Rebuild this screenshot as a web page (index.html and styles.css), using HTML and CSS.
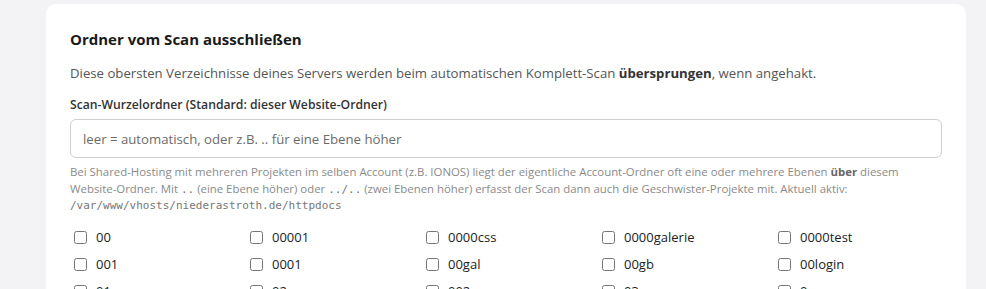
FILE: index.html
```html
<!DOCTYPE html>
<html lang="de">
<head>
<meta charset="utf-8">
<link rel="stylesheet" href="styles.css">
</head>
<body>
<section class="card">
  <h2 class="title">Ordner vom Scan ausschließen</h2>
  <p class="desc">Diese obersten Verzeichnisse deines Servers werden beim automatischen Komplett-Scan <strong>übersprungen</strong>, wenn angehakt.</p>
  <label class="field-label" for="root">Scan-Wurzelordner (Standard: dieser Website-Ordner)</label>
  <input class="field" id="root" type="text" placeholder="leer = automatisch, oder z.B. .. für eine Ebene höher">
  <p class="help">Bei Shared-Hosting mit mehreren Projekten im selben Account (z.B. IONOS) liegt der eigentliche Account-Ordner oft eine oder mehrere Ebenen <strong>über</strong> diesem Website-Ordner. Mit <code>..</code> (eine Ebene höher) oder <code>../..</code> (zwei Ebenen höher) erfasst der Scan dann auch die Geschwister-Projekte mit. Aktuell aktiv: <code>/var/www/vhosts/niederastroth.de/httpdocs</code></p>
  <div class="grid">
    <label class="opt"><input type="checkbox"><span>00</span></label>
    <label class="opt"><input type="checkbox"><span>00001</span></label>
    <label class="opt"><input type="checkbox"><span>0000css</span></label>
    <label class="opt"><input type="checkbox"><span>0000galerie</span></label>
    <label class="opt"><input type="checkbox"><span>0000test</span></label>
    <label class="opt"><input type="checkbox"><span>001</span></label>
    <label class="opt"><input type="checkbox"><span>0001</span></label>
    <label class="opt"><input type="checkbox"><span>00gal</span></label>
    <label class="opt"><input type="checkbox"><span>00gb</span></label>
    <label class="opt"><input type="checkbox"><span>00login</span></label>
    <label class="opt"><input type="checkbox"><span>01</span></label>
    <label class="opt"><input type="checkbox"><span>02</span></label>
    <label class="opt"><input type="checkbox"><span>002</span></label>
    <label class="opt"><input type="checkbox"><span>03</span></label>
    <label class="opt"><input type="checkbox"><span>0</span></label>
  </div>
</section>
</body>
</html>
```

FILE: styles.css
```css
html, body {
  margin: 0;
  background: #f3f3f5;
}
body {
  padding: 4px 20px 0 46px;
  font-family: "Open Sans", "Noto Sans", sans-serif;
  color: #1f1f1f;
  height: 289px;
  overflow: hidden;
  box-sizing: border-box;
}
.card {
  background: #fff;
  border-radius: 10px;
  padding: 24px 24px 24px 24px;
  min-height: 400px;
}
.title {
  margin: 0;
  font-size: 15px;
  line-height: 22px;
  font-weight: 700;
  color: #1a1a1a;
}
.desc {
  margin: 13px 0 0;
  font-size: 13.2px;
  line-height: 20px;
  color: #555;
}
.desc strong {
  color: #333;
  font-weight: 700;
}
.field-label {
  display: block;
  margin-top: 13px;
  font-size: 12.2px;
  line-height: 18px;
  font-weight: 600;
  color: #333;
}
.field {
  display: block;
  box-sizing: border-box;
  width: 100%;
  height: 39px;
  margin-top: 5px;
  padding: 0 12px;
  border: 1px solid #cfcfcf;
  border-radius: 6px;
  font-family: inherit;
  font-size: 13.2px;
  color: #333;
  background: #fff;
}
.field::placeholder {
  color: #6b6b6b;
}
.help {
  margin: 6px 0 0;
  font-size: 11.4px;
  line-height: 16.5px;
  color: #8a8a8a;
}
.help strong {
  color: #666;
  font-weight: 700;
}
.help code {
  font-family: "DejaVu Sans Mono", "Liberation Mono", monospace;
  font-size: 11px;
  line-height: 1;
  color: #777;
}
.grid {
  display: grid;
  grid-template-columns: repeat(5, 1fr);
  column-gap: 8px;
  margin-top: 10px;
}
.opt {
  display: flex;
  align-items: center;
  height: 27px;
  font-size: 13px;
  color: #222;
}
.opt input {
  width: 13px;
  height: 13px;
  margin: 0 6px 0 4px;
}
.opt span {
  padding-left: 3px;
}
```
